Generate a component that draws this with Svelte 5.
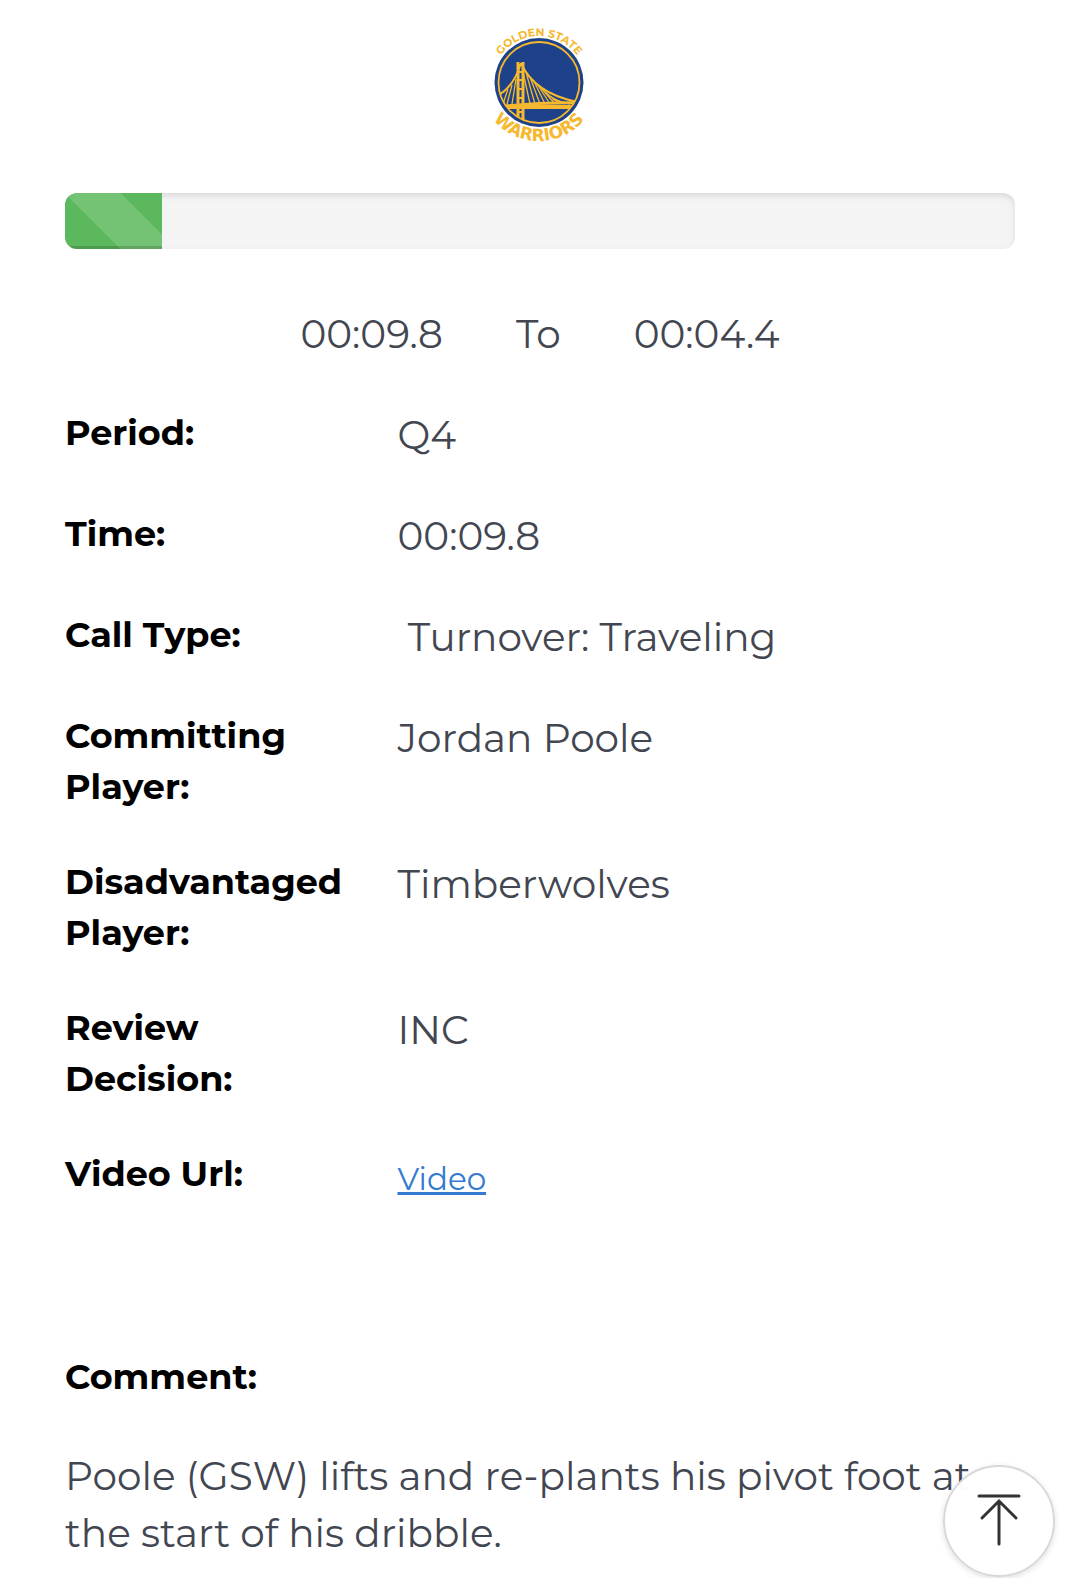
<script>
    export let progress = 10.2;
    export let start = "00:09.8";
    export let end = "00:04.4";

    const details = [
        { label: "Period:", value: "Q4" },
        { label: "Time:", value: "00:09.8" },
        { label: "Call Type:", value: "\u00a0Turnover: Traveling" },
        { label: "Committing Player:", value: "Jordan Poole" },
        { label: "Disadvantaged Player:", value: "Timberwolves" },
        { label: "Review Decision:", value: "INC" },
        { label: "Video Url:", value: "Video", link: "#video" },
    ];

    const comment = "Poole (GSW) lifts and re-plants his pivot foot at the start of his dribble.";

    // suspender cables right of the tower
    const cables = [47, 52, 57, 62, 67, 72, 77, 82, 87];

    const goTop = () => {
        window.scrollTo({ top: 0, behavior: "smooth" });
    }
</script>

<main>
    <svg class="logo" viewBox="0 0 120 130" role="img" aria-label="Golden State Warriors">
        <defs>
            <clipPath id="disc"><circle cx="59" cy="62.5" r="41" /></clipPath>
            <path id="arc-top" d="M12 63 A47 47 0 0 1 106 63" />
            <path id="arc-bottom" d="M0 62 A59 59 0 0 0 118 62" />
        </defs>
        <circle cx="59" cy="62.5" r="44.5" fill="#1d428a" />
        <circle cx="59" cy="62.5" r="40.5" fill="none" stroke="#f5b82e" stroke-width="1.8" />
        <g clip-path="url(#disc)" fill="none" stroke="#f5b82e">
            <path d="M41 43 Q54 73 97 82" stroke-width="2" />
            <path d="M41 43 Q34 66 19 75" stroke-width="2" />
            {#each cables as x}
                <path d="M{41 + (x - 45) * 0.75} {48 + (x - 45) * 0.75} L{x + 3} 84" stroke-width="1.3" />
            {/each}
            <path d="M36 59 L32 84 M32 65 L27 84 M28 69 L23 84" stroke-width="1.3" />
            <path d="M16 87 Q60 82 102 83" stroke-width="3" />
            <path d="M16 87 H102" stroke-width="4" />
            <path d="M38 42 V105 M43 42 V105" stroke-width="3" />
            <path d="M37 45 H44 M37 52 H44 M37 60 H44 M37 69 H44 M37 78 H44 M37 92 H44 M37 99 H44" stroke-width="2" />
        </g>
        <text class="logo-top"><textPath href="#arc-top" startOffset="50%">GOLDEN STATE</textPath></text>
        <text class="logo-bottom"><textPath href="#arc-bottom" startOffset="50%">WARRIORS</textPath></text>
    </svg>

    <div class="progress" role="progressbar" aria-label="Game clock" aria-valuenow={progress} aria-valuemin="0" aria-valuemax="100">
        <div class="progress-bar" style={"width: " + progress + "%;"}></div>
    </div>

    <div class="times">
        <span>{start}</span>
        <span>To</span>
        <span>{end}</span>
    </div>

    <dl>
        {#each details as row}
            <div class="row">
                <dt>{row.label}</dt>
                <dd>
                    {#if row.link}
                        <a href={row.link}>{row.value}</a>
                    {:else}
                        {row.value}
                    {/if}
                </dd>
            </div>
        {/each}
    </dl>

    <h2>Comment:</h2>
    <p>{comment}</p>
</main>

<button class="to-top" aria-label="Back to top" on:click={goTop}>
    <svg viewBox="0 0 48 56" aria-hidden="true">
        <path d="M4 4 H44 M24 10 V52 M7 26 L24 9 L41 26" />
    </svg>
</button>

<style>
    :global(body) {
        margin: 0;
        background-color: #fff;
    }

    main {
        display: flex;
        flex-direction: column;
        padding: 20px 65px 0;
        font-family: Montserrat, Inter, "Open Sans", sans-serif;
        font-size: 39px;
        line-height: 57px;
        font-weight: 400;
        color: #424650;
    }

    .logo {
        width: 120px;
        height: 130px;
        align-self: center;
    }

    .logo text {
        fill: #f5b82e;
        font-weight: 700;
        text-anchor: middle;
    }

    .logo-top {
        font-size: 11px;
    }

    .logo-bottom {
        font-family: "DejaVu Sans", sans-serif;
        font-size: 17px;
    }

    .progress {
        height: 56px;
        margin-top: 43px;
        border-radius: 12px;
        overflow: hidden;
        background-color: #f4f4f4;
        box-shadow: inset 0 3px 6px rgba(0, 0, 0, 0.1);
    }

    .progress-bar {
        height: 100%;
        background-color: #5cb85c;
        background-image: linear-gradient(45deg, rgba(255, 255, 255, 0.15) 25%, transparent 25%, transparent 50%, rgba(255, 255, 255, 0.15) 50%, rgba(255, 255, 255, 0.15) 75%, transparent 75%);
        background-size: 112px 112px;
        box-shadow: inset 0 -3px 0 rgba(0, 0, 0, 0.15);
    }

    .times {
        display: flex;
        justify-content: center;
        gap: 73px;
        margin-top: 57px;
    }

    dl {
        display: flex;
        flex-direction: column;
        gap: 44px;
        margin: 44px 0 0;
    }

    .row {
        display: grid;
        grid-template-columns: 35% 1fr;
    }

    dt, h2 {
        margin: 0;
        font-size: 35px;
        line-height: 51px;
        font-weight: 700;
        color: #000;
    }

    dt {
        padding-right: 45px;
    }

    dd {
        margin: 0;
    }

    a {
        font-size: 31px;
        color: #337ad0;
        text-decoration-thickness: 3px;
    }

    h2 {
        margin-top: 143px;
    }

    p {
        margin: 46px 0 0;
    }

    .to-top {
        position: fixed;
        right: 25px;
        bottom: 1px;
        display: flex;
        align-items: center;
        justify-content: center;
        width: 112px;
        height: 112px;
        padding: 0 0 2px;
        border: 2px solid #d8d8d8;
        border-radius: 50%;
        background-color: rgba(255, 255, 255, 0.98);
        box-shadow: 0 2px 6px rgba(0, 0, 0, 0.12);
        cursor: pointer;
    }

    .to-top svg {
        width: 48px;
        height: 56px;
        fill: none;
        stroke: #333;
        stroke-width: 3;
        stroke-linecap: round;
    }
</style>
